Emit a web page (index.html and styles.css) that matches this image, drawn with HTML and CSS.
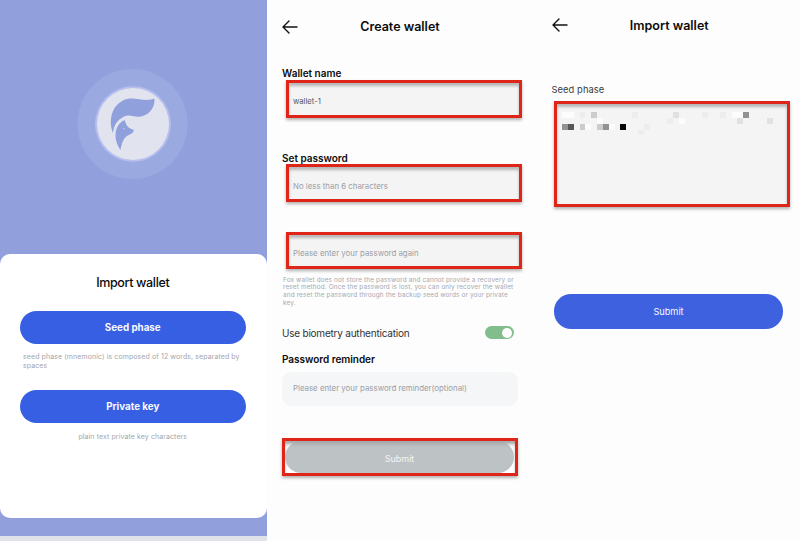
FILE: index.html
```html
<!DOCTYPE html>
<html lang="en">
<head>
<meta charset="utf-8">
<title>Wallet setup</title>
<link rel="stylesheet" href="styles.css">
</head>
<body>
<main class="screens">
  <section class="start">
    <svg class="emblem" viewBox="0 0 125 125" aria-hidden="true">
      <circle cx="62.5" cy="64" r="55" fill="#9ba9e1"/>
      <circle cx="63" cy="64" r="38" fill="#b5beed"/>
      <circle cx="63" cy="64" r="36" fill="#e1e4ee"/>
      <path fill="#8fa0dc" d="M43 73C38 60 42 46 53 40.500C63 35 74 43 84.500 38.500C85 49 78 56 69 56.800C63 57 61 54 54 56.500C47 60 44 65 43 73Z"/>
      <path fill="#8fa0dc" d="M50.500 90C42.500 78 44.500 65 54.500 60L56.500 65C58.500 68 60 68.500 64 70C62 76 57 73.500 53.500 80C51.500 84 51 87 50.500 90Z"/>
      <circle cx="54" cy="68.500" r=".6" fill="#e1e4ee"/>
    </svg>
    <div class="sheet">
      <h1 class="sheet-title">Import wallet</h1>
      <button class="pill">Seed phase</button>
      <p class="hint">seed phase (mnemonic) is composed of 12 words, separated by<br>spaces</p>
      <button class="pill">Private key</button>
      <p class="hint centered">plain text private key characters</p>
    </div>
    <div class="homebar"></div>
  </section>

  <section class="create">
    <header class="bar">
      <svg class="back" viewBox="0 0 16 14"><path d="M15 7H1.200M7 1L1 7L7 13"/></svg>
      <h2 class="bar-title">Create wallet</h2>
    </header>
    <h3 class="label name-label">Wallet name</h3>
    <div class="field marked"><span class="value">wallet-1</span></div>
    <h3 class="label password-label">Set password</h3>
    <div class="field marked"><span class="ph-short">No less than 6 characters</span></div>
    <div class="field marked again"><span class="ph-again">Please enter your password again</span></div>
    <p class="note">Fox wallet does not store the password and cannot provide a recovery or<br>reset method. Once the password is lost, you can only recover the wallet<br>and reset the password through the backup seed words or your private<br>key.</p>
    <div class="toggle-row"><span class="toggle-label">Use biometry authentication</span><span class="toggle"></span></div>
    <h3 class="label reminder-label">Password reminder</h3>
    <div class="field plain"><span>Please enter your password reminder(optional)</span></div>
    <div class="marked submit-mark"><button class="disabled">Submit</button></div>
  </section>

  <section class="import">
    <header class="bar">
      <svg class="back" viewBox="0 0 16 14"><path d="M15 7H1.200M7 1L1 7L7 13"/></svg>
      <h2 class="bar-title">Import wallet</h2>
    </header>
    <h3 class="seed-label">Seed phase</h3>
    <div class="marked seed-box">
      <svg class="mosaic" viewBox="0 0 38 5" shape-rendering="crispEdges">
        <path fill="#fcfcfc" d="M0 0h2v1H0zM4 2h1v1H4zM6 1h1v1H6zM8 2h1v1H8zM29 0h2v1H29zM20 1h1v1H20z"/>
        <path fill="#ededee" d="M3 0h1v1H3zM12 0h1v1H12zM24 0h1v1H24zM27 0h1v1H27zM18 1h1v1H18zM14 2h1v1H14zM13 3h1v1H13z"/>
        <path fill="#e1e1e2" d="M19 0h1v1H19zM30 1h1v1H30zM35 1h1v1H35z"/>
        <path fill="#cccccd" d="M5 0h1v1H5zM3 2h1v1H3zM6 2h1v1H6z"/>
        <path fill="#929292" d="M31 0h1v1H31zM0 2h1v1H0zM7 2h1v1H7z"/>
        <path fill="#575757" d="M1 2h1v1H1z"/>
        <path fill="#050505" d="M10 2h1v1H10z"/>
      </svg>
    </div>
    <button class="pill import-submit">Submit</button>
  </section>
</main>
</body>
</html>
```
FILE: styles.css
```css
* { box-sizing: border-box; }
body { margin: 0; background: #fdfdfd; font-family: Inter, "Liberation Sans", sans-serif; color: #0c0c0d; }
h1, h2, h3, p { margin: 0; }
button { border: 0; font-family: inherit; display: block; padding: 0; }
span { white-space: nowrap; }
.screens { display: grid; grid-template-columns: 267px 270px 263px; width: 800px; height: 541px; overflow: hidden; }

.start { background: #91a0dc; display: flex; flex-direction: column; }
.emblem { width: 125px; height: 125px; margin: 60px 0 0 70px; flex: none; }
.sheet { height: 264px; margin-top: 69.400px; border-radius: 10px; background: #fff; padding: 20px 21.500px 0 20px; flex: none; }
.sheet-title { font-size: 12.500px; line-height: 18px; font-weight: 500; text-align: center; margin-bottom: 18.300px; letter-spacing: -.35px; }
.pill { width: 225.500px; height: 33px; border-radius: 17px; background: #365fe3; color: #f7f9ff; font-size: 9.800px; font-weight: 700; line-height: 33px; }
.hint { font-size: 7px; line-height: 9px; color: #a4a5ac; padding: 8.500px 0 0 3px; height: 46.200px; white-space: nowrap; letter-spacing: .09px; }
.hint.centered { text-align: center; padding: 9px 0 0; }
.homebar { margin-top: auto; height: 5px; background: #e0e2e9; flex: none; }

.create { padding: 18px 15px 0; }
.bar { height: 18px; display: flex; align-items: center; }
.back { width: 16px; height: 14px; fill: none; stroke: #101010; stroke-width: 1.4; stroke-linecap: round; stroke-linejoin: round; flex: none; }
.bar-title { flex: 1; font-size: 12.500px; line-height: 18px; font-weight: 600; text-align: center; padding-right: 20px; }
.label { font-size: 10px; line-height: 14px; font-weight: 600; }
.name-label { margin-top: 30px; }
.password-label { margin-top: 33px; }
.marked { border: 3px solid #de2518; box-shadow: 0 2px 3px #0000004d, inset 0 3px 3px #00000040; background: #f4f4f5; }
.field { width: 236px; height: 38px; margin-left: 4px; padding-left: 4px; display: flex; align-items: center; font-size: 7.850px; color: #9b9da4; }
.create .name-label + .field { color: #55565b; }
.value { font-size: 7.700px; padding-top: 4px; }
.ph-short { padding-top: 6px; }
.ph-again { padding-top: 4px; }
.again { margin-top: 30px; height: 37px; }
.password-label + .field { margin-top: -1px; }
.note { margin: 7.500px 0 0 1px; font-size: 6.400px; line-height: 7.800px; color: #a7a9af; height: 32px; white-space: nowrap; letter-spacing: .15px; }
.toggle-row { margin-top: 16.500px; height: 15px; width: 231.500px; display: flex; justify-content: space-between; align-items: center; }
.toggle-label { font-size: 10px; letter-spacing: -.22px; color: #303135; }
.toggle { width: 29px; height: 13px; border-radius: 7px; background: #82bd8e; display: flex; justify-content: flex-end; align-items: center; padding-right: 2px; }
.toggle::after { content: ""; width: 10px; height: 10px; border-radius: 50%; background: #fff; }
.reminder-label { margin-top: 12px; letter-spacing: -.03px; }
.plain { width: 236px; height: 34px; margin: 6px 0 0; padding-left: 11px; padding-bottom: 2px; border-radius: 9px; background: #f5f6f7; }
.submit-mark { width: 236px; height: 38px; margin-top: 32px; background: linear-gradient(#dedede, #fff 7px); }
.disabled { width: 229px; height: 32px; border-radius: 16px; color: #f3f5f6; background: linear-gradient(#a3a7aa, #bdc2c5 6px); font-size: 9px; padding-top: 3px; }

.import { padding: 16px 0 0 14.500px; }
.import .bar-title { padding-right: 29px; padding-top: 1px; }
.seed-label { font-size: 9.300px; line-height: 14px; font-weight: 400; color: #38393c; margin-top: 48.500px; letter-spacing: .1px; }
.seed-box { width: 236px; height: 106px; margin: 4px 0 0 2.500px; padding: 8px 0 0 5px; }
.mosaic { width: 222.300px; height: 29.250px; display: block; }
.import-submit { width: 229px; height: 35px; line-height: 35px; margin: 87px 0 0 2.500px; background: #3d61df; font-size: 9.200px; font-weight: 400; }
```
